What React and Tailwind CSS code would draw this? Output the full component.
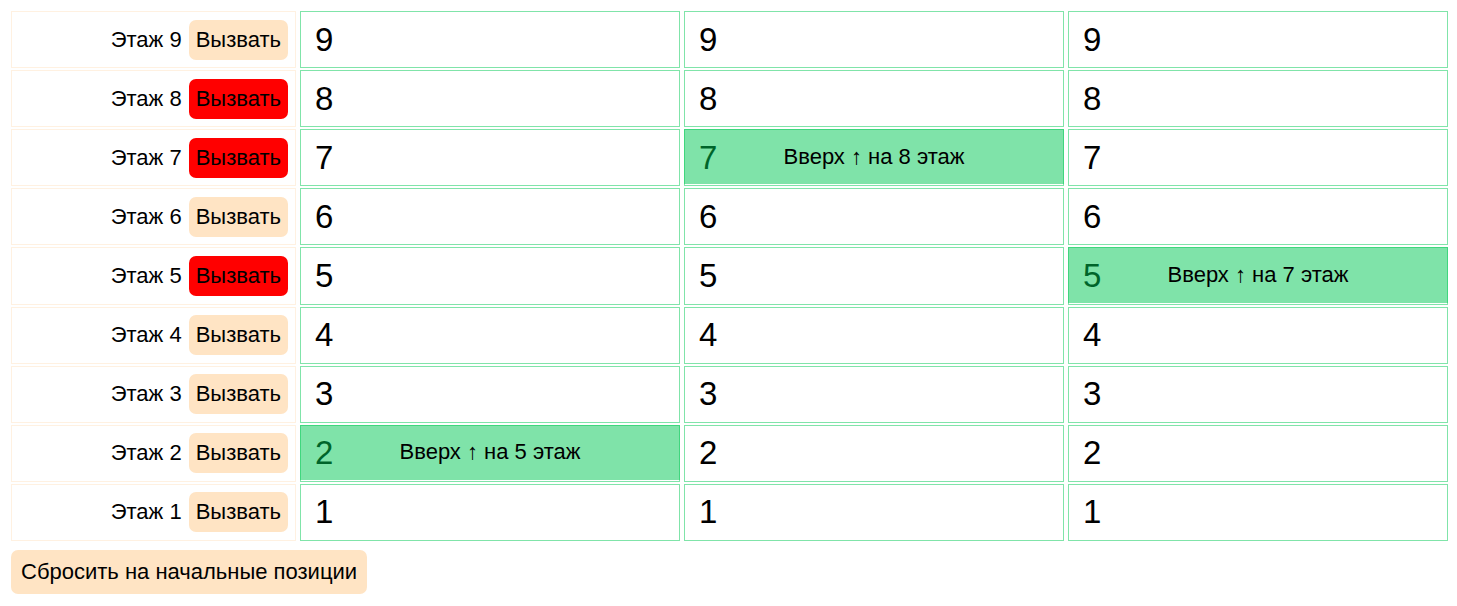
import { Fragment, useState } from 'react';

const FLOORS = [9, 8, 7, 6, 5, 4, 3, 2, 1];

const START = [
  { floor: 1, target: null },
  { floor: 1, target: null },
  { floor: 1, target: null },
];

const CURRENT = [
  { floor: 2, target: 5 },
  { floor: 7, target: 8 },
  { floor: 5, target: 7 },
];

function CallCell({ floor, called, onCall }) {
  return (
    <div className="flex items-center justify-end gap-[7px] border border-[#fff1e1] pr-[7px]">
      <span id={`floor-${floor}`}>Этаж {floor}</span>
      <button
        type="button"
        aria-describedby={`floor-${floor}`}
        onClick={onCall}
        className={`h-10 cursor-pointer rounded-[7px] px-[7px] ${called ? 'bg-[#ff0000]' : 'bg-[#ffe4c4]'}`}
      >
        Вызвать
      </button>
    </div>
  );
}

function ShaftCell({ floor, lift }) {
  const here = lift.floor === floor;
  const up = lift.target > lift.floor;
  return (
    <div className="relative flex items-center border border-[#80e4a9] pl-[14px] text-[33px] leading-10">
      {floor}
      {here && (
        <div className="absolute -inset-x-px -top-px bottom-px flex items-center justify-center bg-[#00c853]/50 text-[22px] leading-7">
          {lift.target && `${up ? 'Вверх ↑' : 'Вниз ↓'} на ${lift.target} этаж`}
        </div>
      )}
    </div>
  );
}

export default function App() {
  const [lifts, setLifts] = useState(CURRENT);
  const [calls, setCalls] = useState([8, 7, 5]);

  const reset = () => {
    setLifts(START);
    setCalls([]);
  };

  return (
    <main className="bg-white pt-[11px] pr-[9px] pb-3 pl-[11px] font-['Liberation_Sans',Arial,sans-serif] text-[22px] leading-7 text-black">
      <div className="grid min-h-[530px] auto-rows-fr grid-cols-[3fr_4fr_4fr_4fr] gap-x-1 gap-y-0.5">
        {FLOORS.map((floor) => (
          <Fragment key={floor}>
            <CallCell
              floor={floor}
              called={calls.includes(floor)}
              onCall={() => setCalls((list) => (list.includes(floor) ? list : [...list, floor]))}
            />
            {lifts.map((lift, i) => (
              <ShaftCell key={i} floor={floor} lift={lift} />
            ))}
          </Fragment>
        ))}
      </div>
      <button
        type="button"
        onClick={reset}
        className="mt-[9px] block h-11 cursor-pointer rounded-[7px] bg-[#ffe4c4] px-[10px]"
      >
        Сбросить на начальные позиции
      </button>
    </main>
  );
}
